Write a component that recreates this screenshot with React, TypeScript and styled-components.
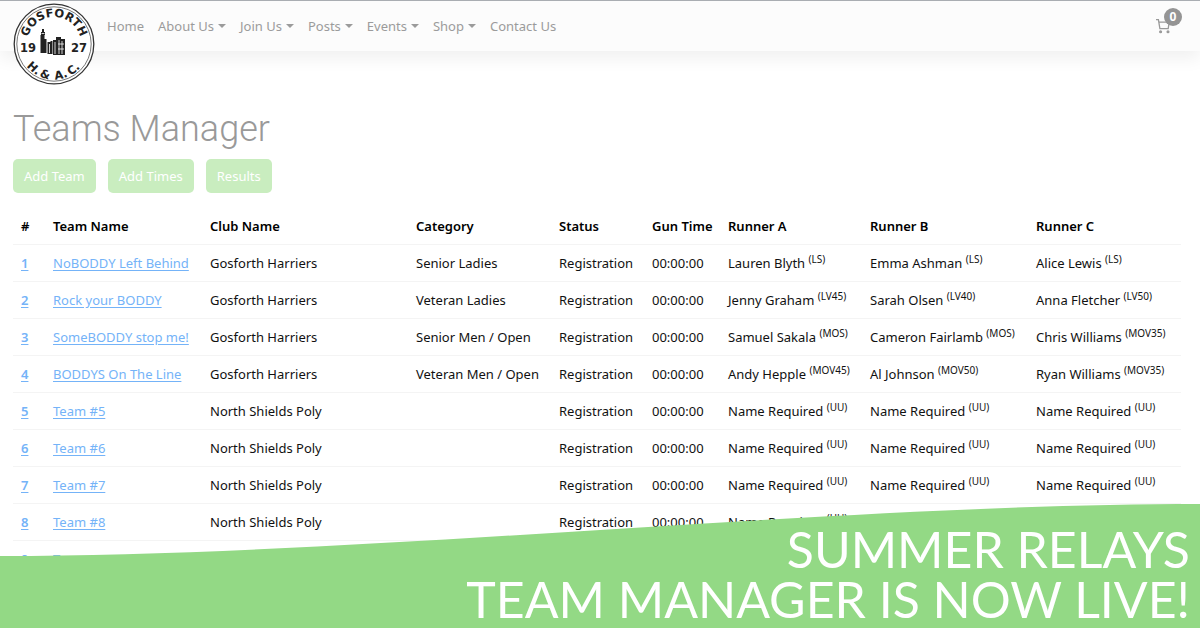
import React from 'react';
import styled, { createGlobalStyle } from 'styled-components';

const GlobalStyle = createGlobalStyle`
  *, *::before, *::after { box-sizing: border-box; }
  body {
    margin: 0;
    background: #fff;
    color: #111;
    font-family: 'Noto Sans', 'Open Sans', sans-serif;
    font-size: 13px;
    line-height: 20px;
  }
`;

const Page = styled.div`
  position: relative;
  height: 100vh;
  overflow: hidden;
`;

const Header = styled.header`
  position: relative;
  display: flex;
  justify-content: space-between;
  height: 51px;
  padding: 0 17px 0 107px;
  border-top: 1px solid #a9adb2;
  background: #fcfcfc;
  box-shadow: 0 8px 16px rgba(0, 0, 0, 0.06);
`;

const LogoLink = styled.a`
  position: absolute;
  top: 1px;
  left: 12px;
  width: 84px;
  height: 84px;

  svg { display: block; }
`;

const Nav = styled.nav`
  display: flex;
  gap: 14px;
  height: 50px;
  align-items: center;
`;

const NavLink = styled.a<{ $menu?: boolean }>`
  display: flex;
  align-items: center;
  gap: 4px;
  color: #9b9b9b;
  text-decoration: none;
  white-space: nowrap;

  &::after {
    content: '';
    display: ${({ $menu }) => ($menu ? 'block' : 'none')};
    border: 4px solid transparent;
    border-top-color: #9b9b9b;
    border-bottom: 0;
  }
`;

const CartLink = styled.a`
  position: relative;
  display: block;
  width: 27px;
  color: #999;

  svg { display: block; margin-top: 17px; }
`;

const CartCount = styled.span`
  position: absolute;
  top: 7px;
  right: 1px;
  width: 18px;
  height: 18px;
  border-radius: 9px;
  background: #949494;
  color: #fff;
  font-size: 12px;
  font-weight: 700;
  line-height: 18px;
  text-align: center;
`;

const Main = styled.main`
  padding: 56px 19px 0 13px;
`;

const Title = styled.h1`
  margin: 0;
  color: #999;
  font-family: Roboto, sans-serif;
  font-size: 36px;
  font-weight: 300;
  line-height: 44px;
`;

const Actions = styled.div`
  display: flex;
  gap: 12px;
  margin: 8px 0 15px;
`;

const ActionButton = styled.button`
  height: 34px;
  padding: 0 11px;
  border: 0;
  border-radius: 5px;
  background: #c9edbf;
  color: #fff;
  font: inherit;
`;

const TeamTable = styled.table`
  width: 100%;
  table-layout: fixed;
  border-collapse: separate;
  border-spacing: 0;

  th, td {
    height: 37px;
    padding: 0 8px;
    border-bottom: 1px solid #f4f4f4;
    text-align: left;
    white-space: nowrap;
  }

  th { font-weight: 600; }
  thead th { color: #000; }
`;

const TeamLink = styled.a`
  color: #74b3f8;
  text-decoration: underline;
  text-underline-offset: 2px;
`;

const AgeGroup = styled.sup`
  font-size: 10px;
  line-height: 0;
  vertical-align: 5px;
`;

const Banner = styled.section`
  position: absolute;
  right: 0;
  bottom: 0;
  left: 0;
  height: 124px;
  padding: 20px 10px 0;
  color: #fff;
  font-family: Lato, sans-serif;
  font-size: 50px;
  line-height: 50px;
  text-align: right;
`;

const Wave = styled.svg`
  position: absolute;
  top: 0;
  left: 0;
  width: 100%;
  height: 100%;
`;

const BannerText = styled.p`
  position: relative;
  margin: 0;
`;

function ClubLogo() {
  return (
    <svg width="84" height="84" viewBox="0 0 84 84" role="img" aria-label="Gosforth Harriers">
      <defs>
        <path id="logoTop" d="M15 42 A27 27 0 0 1 69 42" />
        <path id="logoBottom" d="M6.5 42 A35.5 35.5 0 0 0 77.5 42" />
      </defs>
      <circle cx="42" cy="42" r="39.8" fill="#fff" stroke="#333" strokeWidth="1.3" />
      <circle cx="42" cy="42" r="37.2" fill="none" stroke="#666" strokeWidth="0.9" />
      <g fill="#222" fontFamily="DejaVu Sans, sans-serif" fontWeight="700" fontSize="11.5">
        <text textAnchor="middle">
          <textPath href="#logoTop" startOffset="50%">GOSFORTH</textPath>
        </text>
        <g textAnchor="middle">
          <text><textPath href="#logoBottom" startOffset="28%">H.</textPath></text>
          <text><textPath href="#logoBottom" startOffset="41%">&amp;</textPath></text>
          <text><textPath href="#logoBottom" startOffset="57%">A.</textPath></text>
          <text><textPath href="#logoBottom" startOffset="71%">C.</textPath></text>
        </g>
        <text x="8" y="50">19</text>
        <text x="59" y="50">27</text>
      </g>
      <g fill="#222">
        <path d="M29 30h1v-3h2v3h1v3h-.5v4h2v14h-6V33H29z" />
        <path d="M35.5 40h3v-1h2v13h-5zM41 38h3v-3h5v2h4v16H41z" />
      </g>
      <g stroke="#fff" strokeWidth="0.8" fill="none">
        <path d="M29.500 31.500h3M37.500 42v9M43 40v12M47 38v14M50 39v13M46 42h6M46 47h6" />
      </g>
    </svg>
  );
}

function CartIcon() {
  return (
    <svg width="15" height="16" viewBox="0 0 15 16" fill="none" stroke="currentColor" strokeWidth="1.3">
      <path d="M0 1.700h2.400l1.500 9h8.300l1-6.500H3" />
      <circle cx="4.600" cy="13.800" r="0.900" fill="currentColor" />
      <circle cx="12" cy="13.800" r="0.900" fill="currentColor" />
    </svg>
  );
}

const navItems = [
  { label: 'Home' },
  { label: 'About Us', menu: true },
  { label: 'Join Us', menu: true },
  { label: 'Posts', menu: true },
  { label: 'Events', menu: true },
  { label: 'Shop', menu: true },
  { label: 'Contact Us' },
];

const columns = [
  { label: '#', width: 32 },
  { label: 'Team Name', width: 157 },
  { label: 'Club Name', width: 206 },
  { label: 'Category', width: 143 },
  { label: 'Status', width: 93 },
  { label: 'Gun Time', width: 76 },
  { label: 'Runner A', width: 142 },
  { label: 'Runner B', width: 166 },
  { label: 'Runner C', width: 153 },
];

type Runner = [name: string, group: string];
type Team = { name: string; club: string; category: string; runners: Runner[] };

const gosforth = (name: string, category: string, runners: Runner[]): Team => ({
  name, club: 'Gosforth Harriers', category, runners,
});

const unnamed = (number: number): Team => ({
  name: `Team #${number}`,
  club: 'North Shields Poly',
  category: '',
  runners: [['Name Required', 'UU'], ['Name Required', 'UU'], ['Name Required', 'UU']],
});

const teams: Team[] = [
  gosforth('NoBODDY Left Behind', 'Senior Ladies', [['Lauren Blyth', 'LS'], ['Emma Ashman', 'LS'], ['Alice Lewis', 'LS']]),
  gosforth('Rock your BODDY', 'Veteran Ladies', [['Jenny Graham', 'LV45'], ['Sarah Olsen', 'LV40'], ['Anna Fletcher', 'LV50']]),
  gosforth('SomeBODDY stop me!', 'Senior Men / Open', [['Samuel Sakala', 'MOS'], ['Cameron Fairlamb', 'MOS'], ['Chris Williams', 'MOV35']]),
  gosforth('BODDYS On The Line', 'Veteran Men / Open', [['Andy Hepple', 'MOV45'], ['Al Johnson', 'MOV50'], ['Ryan Williams', 'MOV35']]),
  ...[5, 6, 7, 8, 9].map(unnamed),
];

export default function App() {
  return (
    <Page>
      <GlobalStyle />
      <Header>
        <LogoLink href="#home"><ClubLogo /></LogoLink>
        <Nav>
          {navItems.map(({ label, menu }) => (
            <NavLink key={label} href="#" $menu={menu}>{label}</NavLink>
          ))}
        </Nav>
        <CartLink href="#cart" aria-label="Cart">
          <CartIcon />
          <CartCount>0</CartCount>
        </CartLink>
      </Header>
      <Main>
        <Title>Teams Manager</Title>
        <Actions>
          <ActionButton type="button">Add Team</ActionButton>
          <ActionButton type="button">Add Times</ActionButton>
          <ActionButton type="button">Results</ActionButton>
        </Actions>
        <TeamTable>
          <colgroup>
            {columns.map(({ label, width }) => <col key={label} width={width} />)}
          </colgroup>
          <thead>
            <tr>{columns.map(({ label }) => <th key={label} scope="col">{label}</th>)}</tr>
          </thead>
          <tbody>
            {teams.map((team, index) => (
              <tr key={team.name}>
                <th scope="row"><TeamLink href="#team">{index + 1}</TeamLink></th>
                <td><TeamLink href="#team">{team.name}</TeamLink></td>
                <td>{team.club}</td>
                <td>{team.category}</td>
                <td>Registration</td>
                <td>00:00:00</td>
                {team.runners.map(([name, group], i) => (
                  <td key={i}>{name} <AgeGroup>({group})</AgeGroup></td>
                ))}
              </tr>
            ))}
          </tbody>
        </TeamTable>
      </Main>
      <Banner>
        <Wave viewBox="0 0 1200 124" preserveAspectRatio="none" aria-hidden="true">
          <path d="M0 52C368 52 832 0 1200 0V124H0Z" fill="#93d985" />
        </Wave>
        <BannerText>SUMMER RELAYS<br />TEAM MANAGER IS NOW LIVE!</BannerText>
      </Banner>
    </Page>
  );
}
